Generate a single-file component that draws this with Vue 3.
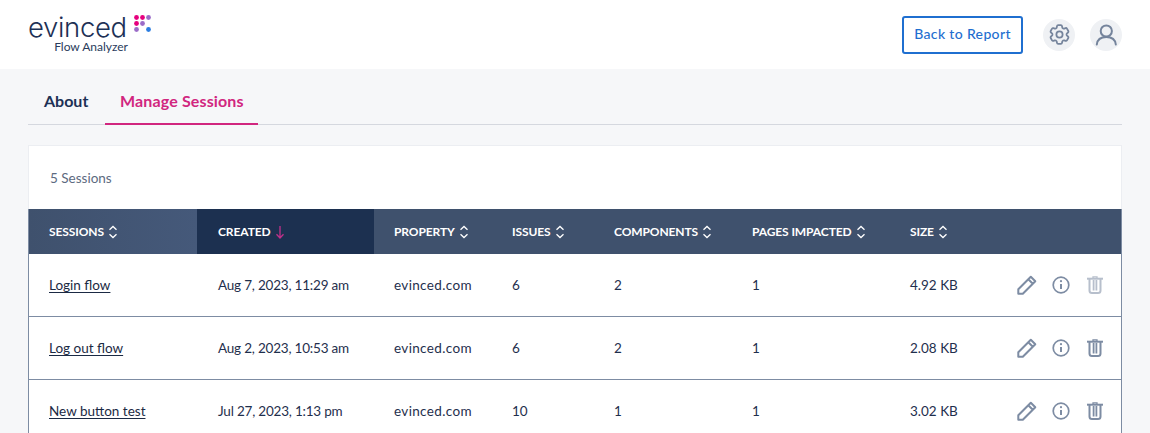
<script setup>
const sorts = [
  { label: 'SESSIONS', cls: 'c1' },
  { label: 'CREATED', cls: 'c2', active: true },
  { label: 'PROPERTY', cls: 'c3' },
  { label: 'ISSUES', cls: 'c4' },
  { label: 'COMPONENTS', cls: 'c5' },
  { label: 'PAGES IMPACTED', cls: 'c6' },
  { label: 'SIZE', cls: 'c7' },
]
const rows = [
  { name: 'Login flow', created: 'Aug 7, 2023, 11:29 am', prop: 'evinced.com', issues: 6, comps: 2, pages: 1, size: '4.92 KB', faded: true },
  { name: 'Log out flow', created: 'Aug 2, 2023, 10:53 am', prop: 'evinced.com', issues: 6, comps: 2, pages: 1, size: '2.08 KB' },
  { name: 'New button test', created: 'Jul 27, 2023, 1:13 pm', prop: 'evinced.com', issues: 10, comps: 1, pages: 1, size: '3.02 KB' },
]
const dots = [
  ['#e6007e', 0, 0], ['#e6007e', 6, 0], ['#9b6cc8', 12, 0],
  ['#e6007e', 0, 6], ['#9b6cc8', 6, 6],
  ['#9b6cc8', 0, 12], ['#2a7de1', 12, 12],
]
</script>

<template>
  <div class="page">
    <header class="top">
      <div class="logo">
        <div class="brand">
          <span class="word">evinced</span>
          <svg class="dots" width="17" height="17" viewBox="-2.500 -2.500 17 17" aria-hidden="true">
            <circle v-for="(d, i) in dots" :key="i" :cx="d[1]" :cy="d[2]" r="2.400" :fill="d[0]" />
          </svg>
        </div>
        <div class="sub">Flow Analyzer</div>
      </div>
      <div class="top-actions">
        <button class="back">Back to Report</button>
        <span class="round">
          <svg width="25" height="25" viewBox="0 0 24 24" fill="none" stroke="#75849c" stroke-width="1.700" stroke-linejoin="round">
            <path d="M9.594 3.94c.09-.542.56-.94 1.11-.94h2.593c.55 0 1.02.398 1.11.94l.213 1.281c.063.374.313.686.645.87.074.04.147.083.22.127.324.196.72.257 1.075.124l1.217-.456a1.125 1.125 0 011.37.49l1.296 2.247a1.125 1.125 0 01-.26 1.431l-1.003.827c-.293.24-.438.613-.431.992a6.759 6.759 0 010 .255c-.007.378.138.75.43.99l1.005.828c.424.35.534.954.26 1.43l-1.298 2.247a1.125 1.125 0 01-1.369.491l-1.217-.456c-.355-.133-.75-.072-1.076.124a6.57 6.57 0 01-.22.128c-.331.183-.581.495-.644.869l-.213 1.28c-.09.543-.56.941-1.11.941h-2.594c-.55 0-1.02-.398-1.11-.94l-.213-1.281c-.062-.374-.312-.686-.644-.87a6.52 6.52 0 01-.22-.127c-.325-.196-.72-.257-1.076-.124l-1.217.456a1.125 1.125 0 01-1.369-.49l-1.297-2.247a1.125 1.125 0 01.26-1.431l1.004-.827c.292-.24.437-.613.43-.992a6.932 6.932 0 010-.255c.007-.378-.138-.75-.43-.99l-1.004-.828a1.125 1.125 0 01-.26-1.43l1.297-2.247a1.125 1.125 0 011.37-.491l1.216.456c.356.133.751.072 1.076-.124.072-.044.146-.087.22-.128.332-.183.582-.495.644-.869l.214-1.281z" />
            <circle cx="12" cy="12" r="3" />
          </svg>
        </span>
        <span class="round">
          <svg width="24" height="24" viewBox="0 0 24 24" fill="none" stroke="#75849c" stroke-width="2" stroke-linecap="round">
            <circle cx="12.300" cy="8" r="5.600" />
            <path d="M2.800 21.500c.5-4.500 4-7.500 9.500-7.500s9 3 9.500 7.500" />
          </svg>
        </span>
      </div>
    </header>

    <main class="content">
      <nav class="tabs">
        <a class="tab about">About</a>
        <a class="tab on">Manage Sessions</a>
      </nav>

      <section class="card">
        <div class="count">5 Sessions</div>
        <div class="table">
          <div class="thead">
            <div v-for="c in sorts" :key="c.label" class="th" :class="[c.cls, { active: c.active }]">
              <span>{{ c.label }}</span>
              <svg v-if="c.active" width="10" height="14" viewBox="0 0 10 14" fill="none" stroke="#c0318a" stroke-width="1.300">
                <path d="M5 1v12M1.500 9.300 5 13l3.500-3.700" />
              </svg>
              <svg v-else width="10" height="14" viewBox="0 0 10 14" fill="none" stroke="#fff" stroke-width="1.300">
                <path d="M1.500 4.800 5 1.500l3.500 3.300M1.500 9.200 5 12.500l3.500-3.300" />
              </svg>
            </div>
          </div>
          <div v-for="r in rows" :key="r.name" class="row">
            <div class="td c1"><a class="link">{{ r.name }}</a></div>
            <div class="td c2 date">{{ r.created }}</div>
            <div class="td c3 prop">{{ r.prop }}</div>
            <div class="td c4">{{ r.issues }}</div>
            <div class="td c5">{{ r.comps }}</div>
            <div class="td c6">{{ r.pages }}</div>
            <div class="td size">{{ r.size }}</div>
            <div class="icons">
              <svg width="20" height="20" viewBox="0 0 20 20" fill="none" stroke="#7d8ca3" stroke-width="2" stroke-linejoin="round">
                <path d="M1.300 18.700v-4.500L13.800 1.700l4.500 4.500L5.800 18.700zM11.300 4.200l4.500 4.500" />
              </svg>
              <svg width="18" height="18" viewBox="0 0 18 18" fill="none" stroke="#7d8ca3" stroke-width="1.700">
                <circle cx="9" cy="9" r="7.800" />
                <path d="M9 8v5" stroke-width="2" />
                <circle cx="9" cy="5.200" r="1.100" fill="#7d8ca3" stroke="none" />
              </svg>
              <svg class="trash" :class="{ faded: r.faded }" width="16" height="18" viewBox="0 0 16 18" fill="none" stroke="#7d8ca3" stroke-width="2">
                <path d="M0 2.700h16" />
                <path d="M6 2.500V.8h4v1.700" stroke-width="1.300" />
                <path d="M2.500 3v11.500a2.500 2.500 0 0 0 2.500 2.500h6a2.500 2.500 0 0 0 2.500-2.500V3" />
                <path d="M6.600 4v10.500M9.400 4v10.500" stroke-width="1.800" />
              </svg>
            </div>
          </div>
        </div>
      </section>
    </main>
  </div>
</template>

<style>
html, body { margin: 0; overflow: hidden; }
</style>

<style scoped>
.page {
  height: 433px;
  overflow: hidden;
  background: #f6f7f9;
  font-family: Lato, "Noto Sans", sans-serif;
  color: #1f2f4d;
}
.top {
  height: 69px;
  background: #fff;
  display: flex;
  justify-content: space-between;
  align-items: center;
  padding: 0 28px;
}
.logo { width: 125px; }
.brand { display: flex; align-items: flex-start; height: 25px; }
.word {
  display: block;
  font-family: Inter, Lato, sans-serif;
  font-size: 27.500px;
  line-height: 25px;
  height: 25px;
  font-weight: 350;
  color: #1d3155;
  letter-spacing: -.35px;
}
.dots { margin-left: 7px; }
.sub {
  font-size: 12px;
  line-height: 14px;
  color: #2a3c5c;
  text-align: right;
  width: 100px;
}
.top-actions { display: flex; align-items: center; }
.back {
  width: 121px;
  height: 38px;
  box-sizing: border-box;
  background: #fff;
  border: 2px solid #1f6fd0;
  border-radius: 3px;
  color: #1f6fd0;
  font: 500 14px Lato, sans-serif;
  letter-spacing: .35px;
  padding: 0 0 2px;
  margin-right: 20px;
}
.round {
  width: 32px;
  height: 32px;
  border-radius: 50%;
  background: #eff1f4;
  display: flex;
  align-items: center;
  justify-content: center;
}
.round + .round { margin-left: 15px; }
.content { padding: 0 28px; }
.tabs {
  display: flex;
  height: 56px;
  box-sizing: border-box;
  border-bottom: 1px solid #d5d8df;
}
.tab {
  box-sizing: border-box;
  height: 56px;
  padding: 22px 15px 0;
  font-size: 16px;
  line-height: 20px;
  font-weight: 700;
  color: #1d3155;
}
.tab.about { width: 77px; padding-left: 16px; }
.tab.on {
  color: #d1267f;
  border-bottom: 2px solid #d1267f;
  width: 153px;
  white-space: nowrap;
  letter-spacing: .14px;
}
.card {
  width: 1094px;
  box-sizing: border-box;
  margin-top: 20px;
  background: #fff;
  border: 1px solid #eceef2;
  border-bottom: 0;
}
.count {
  height: 63px;
  padding-left: 21px;
  line-height: 64px;
  font-size: 13.500px;
  color: #5c6a80;
}
.table {
  margin: 0 -1px;
  border-left: 1px solid #7d8ca3;
  border-right: 1px solid #7d8ca3;
}
.thead {
  display: flex;
  height: 45px;
  background: #3f516d;
}
.c1 { width: 168px; }
.c2 { width: 177px; padding-left: 21px !important; }
.c3 { width: 118px; }
.c4 { width: 102px; }
.c5 { width: 138px; }
.c6 { width: 158px; }
.c7 { width: 231px; }
.th {
  box-sizing: border-box;
  display: flex;
  align-items: center;
  gap: 4px;
  padding-left: 20px;
  color: #fff;
  font-size: 12px;
  font-weight: 700;
  letter-spacing: -.1px;
}
.th.c1 { background: linear-gradient(90deg, #3f516d, #45597a); }
.th.active { background: #1c3050; }
.row {
  display: flex;
  align-items: center;
  height: 63px;
  box-sizing: border-box;
  border-bottom: 1px solid #7d8ca3;
  font-size: 13.500px;
  color: #1f2f4d;
}
.td { box-sizing: border-box; padding-left: 20px; white-space: nowrap; }
.date { letter-spacing: -.2px; }
.prop { letter-spacing: .35px; }
.size { width: 106px; }
.link { text-decoration: underline; text-underline-offset: 2px; color: #1b2a44; }
.icons {
  display: flex;
  align-items: center;
  gap: 15px;
  padding-left: 21px;
}
.trash { margin-left: 2px; }
.faded { opacity: .55; }
</style>
